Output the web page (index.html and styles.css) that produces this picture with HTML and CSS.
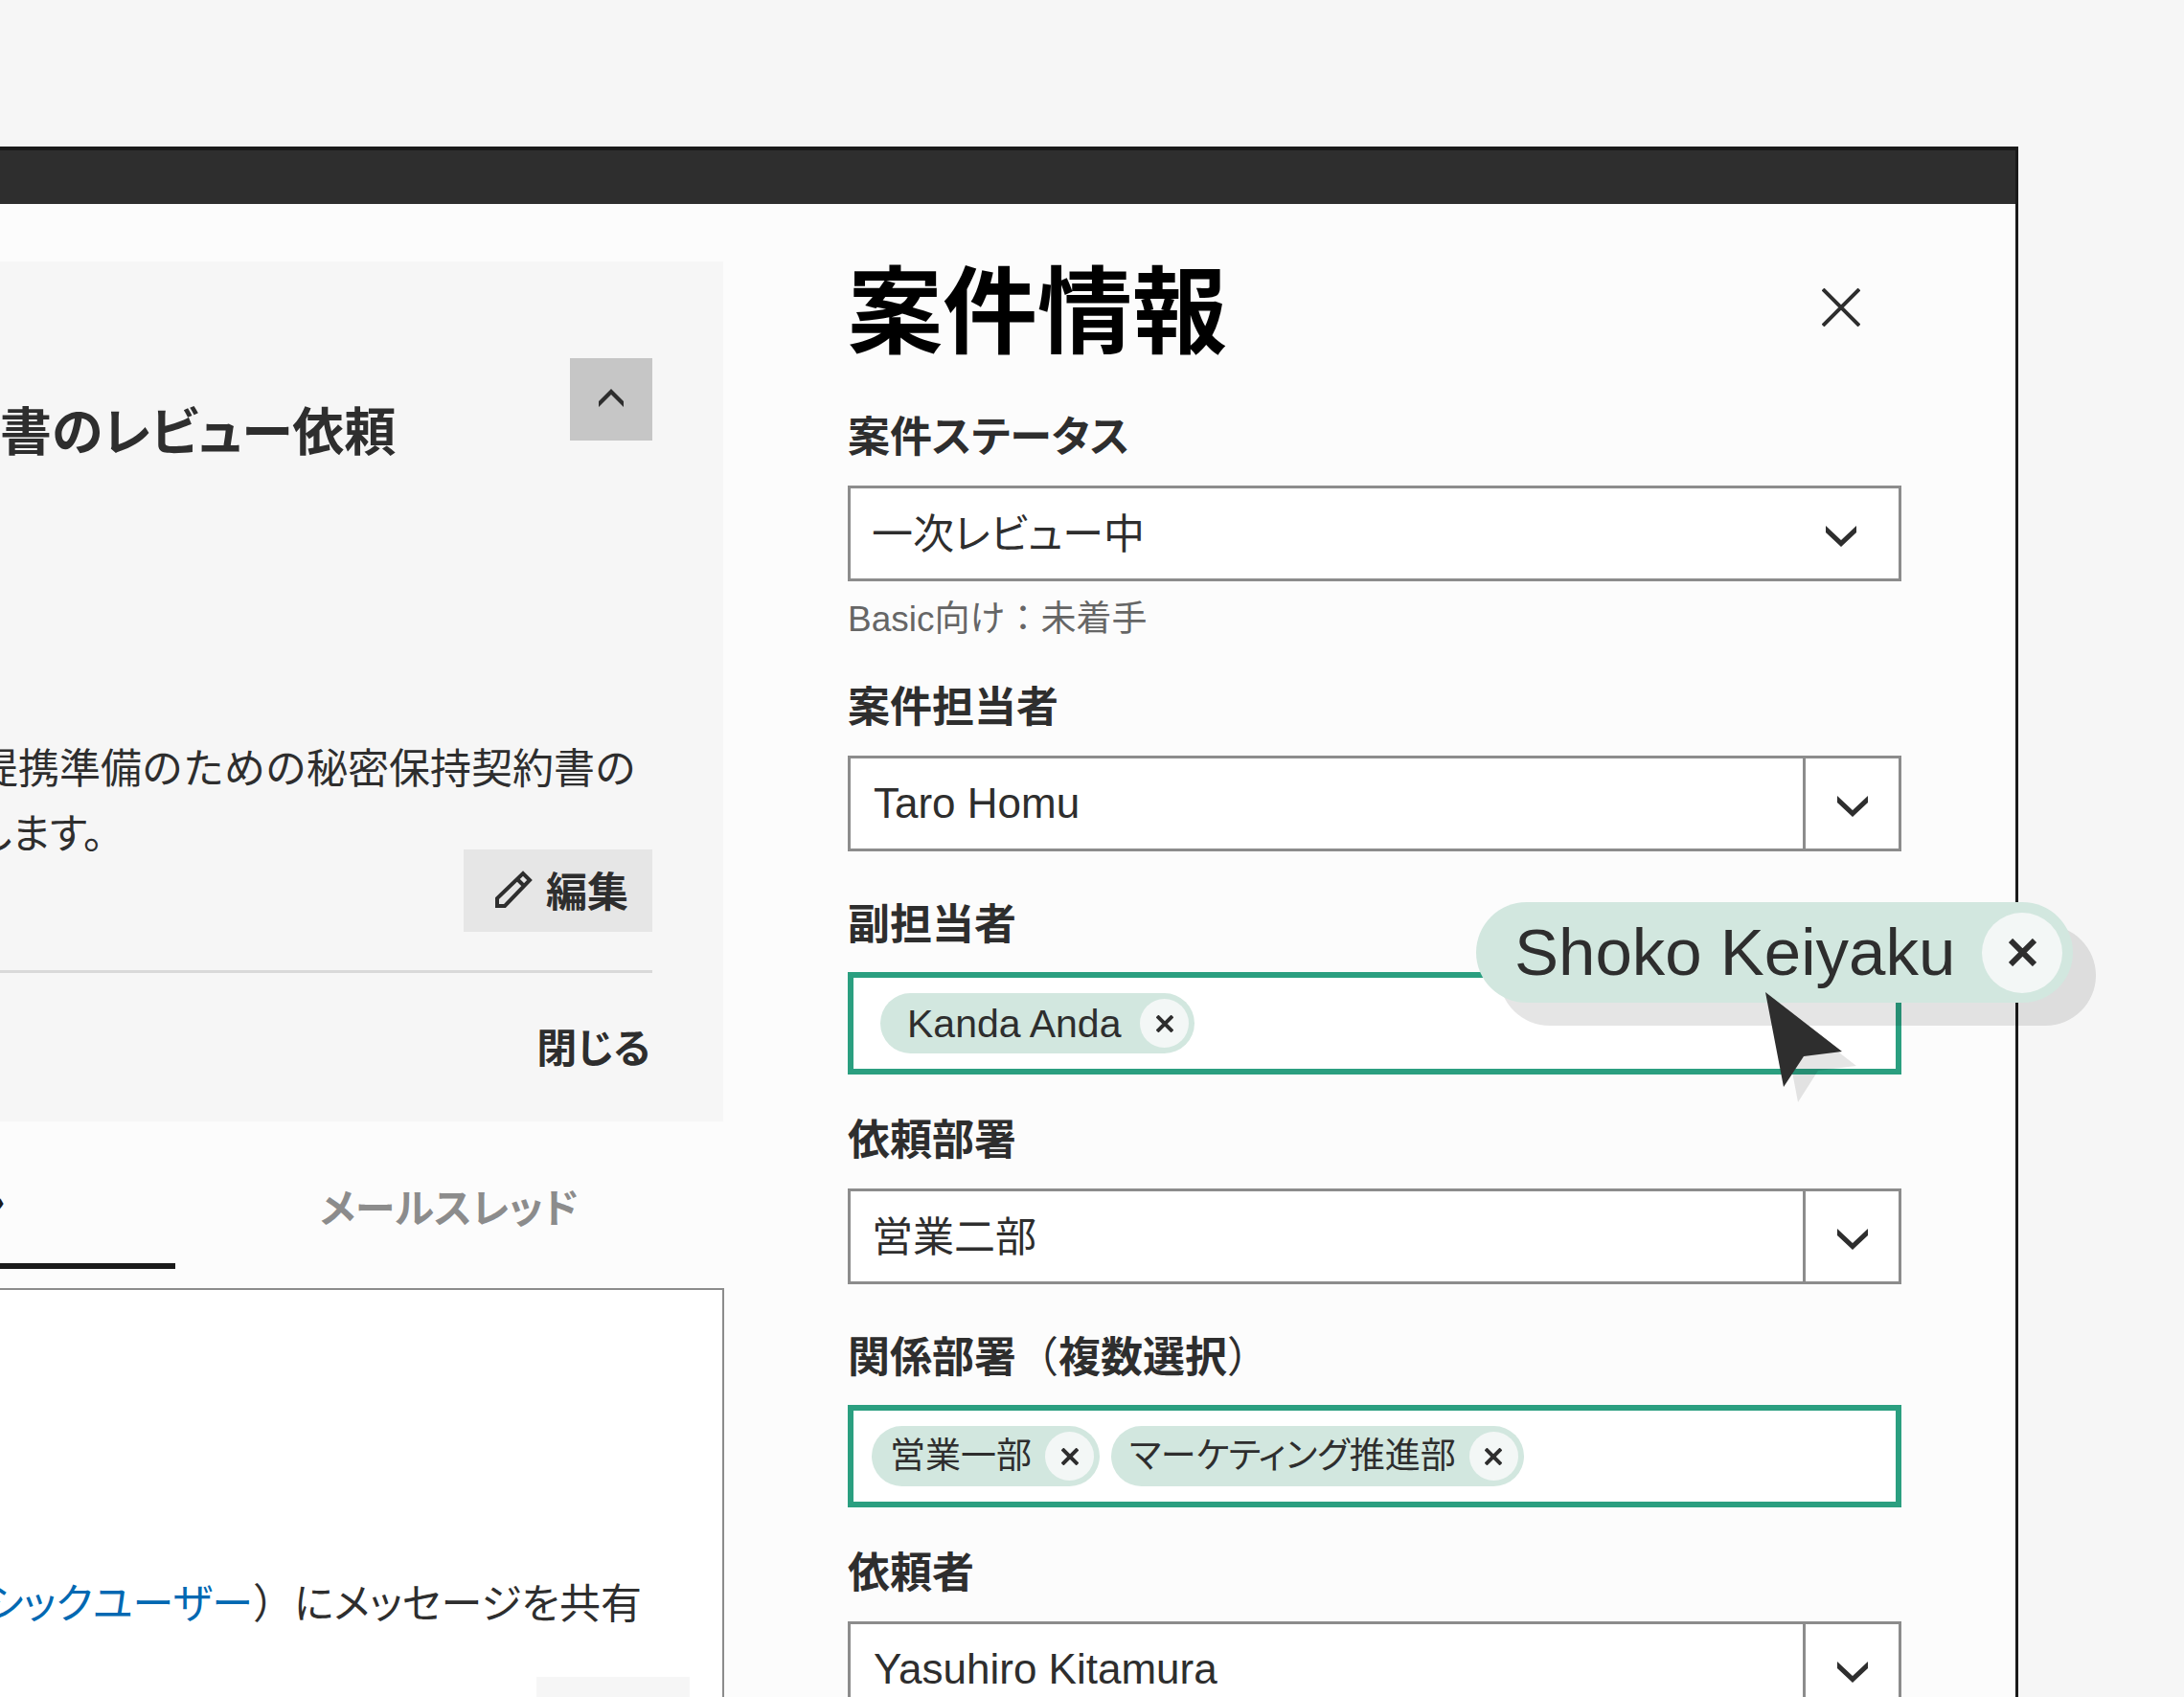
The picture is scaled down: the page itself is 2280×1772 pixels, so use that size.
FILE: index.html
```html
<!DOCTYPE html>
<html lang="ja">
<head>
<meta charset="utf-8">
<meta name="viewport" content="width=device-width, initial-scale=1">
<title>案件情報</title>
<link rel="stylesheet" href="styles.css">
</head>
<body>
<div class="page">
  <div class="window">
    <header class="titlebar"></header>
    <div class="workspace">
      <main class="main">
        <section class="card">
          <div class="card-head">
            <h2 class="card-title">書のレビュー依頼</h2>
            <button class="toggle" type="button" aria-label="折りたたむ">
              <svg width="26" height="19" viewBox="0 0 26 19"><path d="M0 13 13 0 26 13V19L13 6 0 19Z" fill="currentColor"/></svg>
            </button>
          </div>
          <p class="card-text">提携準備のための秘密保持契約書の<br><span class="kana">します。</span></p>
          <div class="card-actions">
            <button class="edit" type="button">
              <svg width="39" height="39" viewBox="0 0 39 39" fill="none" stroke="currentColor" stroke-width="4"><path d="M2 37V29L29 3 36 10 10 37ZM23 9 30 16"/></svg>
              編集
            </button>
          </div>
          <div class="card-foot">
            <button class="close-text" type="button">閉じる</button>
          </div>
        </section>
        <nav class="tabs">
          <a class="tab tab-active" href="#timeline">ン</a>
          <a class="tab" href="#mail">メールスレッド</a>
        </nav>
        <section class="timeline" id="timeline">
          <p class="message"><a class="mention" href="#user">シックユーザー</a><span class="paren">）</span>にメッセージを共有</p>
          <button class="message-action" type="button" aria-label="操作"></button>
        </section>
      </main>

      <aside class="panel">
        <div class="panel-head">
          <h1 class="panel-title">案件情報</h1>
          <button class="panel-close" type="button" aria-label="閉じる">
            <svg width="40" height="40" viewBox="0 0 40 40" fill="none" stroke="currentColor" stroke-width="4"><path d="M1 1 39 39M39 1 1 39"/></svg>
          </button>
        </div>
        <form class="form">
          <div class="field">
            <label class="label" for="status">案件ステータス</label>
            <div class="select-box">
              <select class="control select" id="status"><option>一次レビュー中</option></select>
              <svg class="select-icon" width="32" height="22" viewBox="0 0 32 22"><path d="M0 0 16 15 32 0V7L16 22 0 7Z" fill="currentColor"/></svg>
            </div>
            <p class="hint">Basic向け：未着手</p>
          </div>

          <div class="field">
            <label class="label" for="owner">案件担当者</label>
            <div class="combo">
              <input class="control combo-input" id="owner" type="text" value="Taro Homu">
              <button class="combo-button" type="button" aria-label="一覧を開く">
                <svg width="32" height="22" viewBox="0 0 32 22"><path d="M0 0 16 15 32 0V7L16 22 0 7Z" fill="currentColor"/></svg>
              </button>
            </div>
          </div>

          <div class="field field-tokens">
            <span class="label">副担当者</span>
            <div class="tokens tokens-person">
              <span class="chip chip-person">Kanda Anda
                <button class="chip-remove" type="button" aria-label="削除"><svg width="18" height="18" viewBox="0 0 18 18" fill="none" stroke="currentColor" stroke-width="4"><path d="M1 1 17 17M17 1 1 17"/></svg></button>
              </span>
            </div>
            <span class="chip-drag">Shoko Keiyaku
              <button class="chip-remove chip-remove-large" type="button" aria-label="削除"><svg width="29" height="29" viewBox="0 0 29 29" fill="none" stroke="currentColor" stroke-width="6"><path d="M2 2 27 27M27 2 2 27"/></svg></button>
            </span>
            <svg class="cursor" width="95" height="115" viewBox="0 0 95 115">
              <path d="M15 15 95 77 55 82 34 115Z" fill="#000" fill-opacity=".1"/>
              <path d="M0 0 80 62 40 67 19 99Z" fill="#2e2e2e"/>
            </svg>
          </div>

          <div class="field">
            <label class="label" for="dept">依頼部署</label>
            <div class="combo">
              <input class="control combo-input control-ja" id="dept" type="text" value="営業二部">
              <button class="combo-button" type="button" aria-label="一覧を開く">
                <svg width="32" height="22" viewBox="0 0 32 22"><path d="M0 0 16 15 32 0V7L16 22 0 7Z" fill="currentColor"/></svg>
              </button>
            </div>
          </div>

          <div class="field field-tokens">
            <span class="label">関係部署<span class="paren">（</span>複数選択<span class="paren">）</span></span>
            <div class="tokens">
              <span class="chip">営業一部
                <button class="chip-remove" type="button" aria-label="削除"><svg width="18" height="18" viewBox="0 0 18 18" fill="none" stroke="currentColor" stroke-width="4"><path d="M1 1 17 17M17 1 1 17"/></svg></button>
              </span>
              <span class="chip">マーケティング推進部
                <button class="chip-remove" type="button" aria-label="削除"><svg width="18" height="18" viewBox="0 0 18 18" fill="none" stroke="currentColor" stroke-width="4"><path d="M1 1 17 17M17 1 1 17"/></svg></button>
              </span>
            </div>
          </div>

          <div class="field">
            <label class="label" for="requester">依頼者</label>
            <div class="combo">
              <input class="control combo-input" id="requester" type="text" value="Yasuhiro Kitamura">
              <button class="combo-button" type="button" aria-label="一覧を開く">
                <svg width="32" height="22" viewBox="0 0 32 22"><path d="M0 0 16 15 32 0V7L16 22 0 7Z" fill="currentColor"/></svg>
              </button>
            </div>
          </div>
        </form>
      </aside>
    </div>
  </div>
</div>
</body>
</html>
```
FILE: styles.css
```css
:root {
  --ink: #2e2e2e;
  --line: #8c8c8c;
  --green: #2b9f80;
  --mint: #d2e7df;
  --soft: #f6f6f6;
}

* { box-sizing: border-box; }

body, h1, h2, p { margin: 0; }

body {
  background: var(--soft);
  color: var(--ink);
  font-family: "Liberation Sans", "Noto Sans CJK JP", sans-serif;
  font-size: 43px;
  font-feature-settings: "palt";
}

button, input, select {
  margin: 0;
  padding: 0;
  border: 0;
  border-radius: 0;
  background: none;
  color: inherit;
  font: inherit;
  font-feature-settings: inherit;
}

button { display: flex; align-items: center; justify-content: center; }

a { color: inherit; text-decoration: none; }

svg { display: block; flex: none; }

.paren { font-weight: 400; font-feature-settings: normal; }

.page {
  height: 100vh;
  padding: 153px 173px 0 0;
  overflow: hidden;
}

.window {
  min-height: 100%;
  margin-left: -24px;
  border-top: 4px solid #1a1a1a;
  border-right: 3px solid #1a1a1a;
  background: #fcfcfc;
}

.titlebar { height: 56px; background: var(--ink); }

.workspace {
  display: grid;
  grid-template-columns: 779fr 1100fr;
  gap: 130px;
  padding-right: 119px;
}

/* Request summary */
.main { min-width: 0; padding-top: 60px; }

.card {
  padding: 101px 74px 32px 0;
  background: var(--soft);
}

.card-head {
  display: flex;
  align-items: flex-start;
  justify-content: space-between;
}

.card-title {
  padding: 38px 0 0 24px;
  font-size: 54px;
  line-height: 80px;
}

.toggle { width: 86px; height: 86px; padding-bottom: 4px; background: #c6c6c6; }

.card-text {
  margin-top: 277px;
  line-height: 68px;
  white-space: nowrap;
  font-feature-settings: normal;
}

.kana { font-feature-settings: "palt"; }

.card-actions {
  display: flex;
  justify-content: flex-end;
  margin-top: -18px;
  padding-bottom: 40px;
  border-bottom: 3px solid #d9d9d9;
}

.edit {
  gap: 14px;
  width: 197px;
  height: 86px;
  padding: 0 0 4px 8px;
  background: #e6e6e6;
  font-weight: 700;
}

.card-foot {
  display: flex;
  justify-content: flex-end;
  padding: 35px 2px 8px 0;
}

.close-text { height: 80px; font-size: 42px; font-weight: 700; }

.tabs { display: flex; height: 154px; }

.tab {
  flex: 1;
  height: 100%;
  padding-top: 60px;
  font-size: 42px;
  line-height: 64px;
  text-align: center;
  font-weight: 700;
  color: var(--line);
}

.tab-active {
  flex: 0 0 207px;
  border-bottom: 6px solid #1a1a1a;
  color: #1a1a1a;
  text-align: left;
  text-indent: -10px;
}

.timeline {
  display: flex;
  flex-direction: column;
  align-items: flex-end;
  margin: 20px -1px 0 0;
  padding: 296px 34px 40px 0;
  border: 2px solid var(--line);
  background: #fff;
}

.message {
  padding-right: 50px;
  line-height: 64px;
  white-space: nowrap;
}

.mention { color: #0068b2; }

.message-action { width: 160px; height: 86px; margin-top: 44px; background: var(--soft); }

/* Case information panel */
.panel { min-width: 0; padding-top: 50px; }

.panel-head {
  display: flex;
  align-items: flex-start;
  justify-content: space-between;
  padding-right: 43px;
}

.panel-title {
  padding-top: 4px;
  color: #000;
  font-size: 99px;
  line-height: 120px;
}

.panel-close { margin-top: 38px; }

.form {
  display: flex;
  flex-direction: column;
  gap: 46px;
  margin-top: 39px;
}

.field { position: relative; }

.label {
  display: block;
  margin-bottom: 19px;
  font-size: 44px;
  line-height: 62px;
  font-weight: 700;
}

.control {
  width: 100%;
  height: 100px;
  padding: 0 24px;
  border: 3px solid var(--line);
  background: #fff;
  font-size: 44px;
}

.control-ja, .select {
  padding: 0 22px 6px;
  font-family: "Noto Sans CJK JP", sans-serif;
  font-size: 43px;
}

.select-box { display: grid; align-items: center; }

.select, .select-icon { grid-area: 1 / 1; }

.select { appearance: none; }

.select-icon { justify-self: end; margin: 5px 47px 0 0; pointer-events: none; }

.hint {
  margin-top: 22px;
  margin-bottom: -3px;
  color: #666;
  font-size: 37px;
  line-height: 36px;
  font-feature-settings: normal;
}

.combo { display: flex; }

.combo-input { flex: 1; min-width: 0; border-right: 0; }

.combo-button {
  width: 103px;
  height: 100px;
  padding-top: 5px;
  border: 3px solid var(--line);
  background: #fff;
}

.field-tokens { margin-bottom: -8px; }

.field-tokens .label { margin-bottom: 18px; }

.tokens {
  display: flex;
  align-items: center;
  gap: 12px;
  height: 107px;
  padding: 0 19px;
  border: 6px solid var(--green);
  background: #fff;
}

.tokens-person { padding: 0 28px; }

.chip {
  display: flex;
  align-items: center;
  gap: 14px;
  height: 63px;
  padding: 0 6px 0 19px;
  border-radius: 32px;
  background: var(--mint);
  font-size: 37px;
  line-height: 60px;
}

.chip-person { padding-left: 28px; gap: 20px; font-size: 41px; }

.chip-remove {
  width: 51px;
  height: 51px;
  border-radius: 50%;
  background: #f3f7f6;
}

.chip-drag {
  position: absolute;
  z-index: 1;
  top: 7px;
  right: -179px;
  display: flex;
  align-items: center;
  justify-content: space-between;
  width: 623px;
  height: 105px;
  padding: 0 11px 0 40px;
  border-radius: 53px;
  background: var(--mint);
  box-shadow: 24px 24px 0 rgba(0, 0, 0, .1);
  font-size: 69px;
  white-space: nowrap;
}

.chip-remove-large { width: 84px; height: 84px; }

.cursor { position: absolute; z-index: 2; top: 101px; right: 47px; }
```
